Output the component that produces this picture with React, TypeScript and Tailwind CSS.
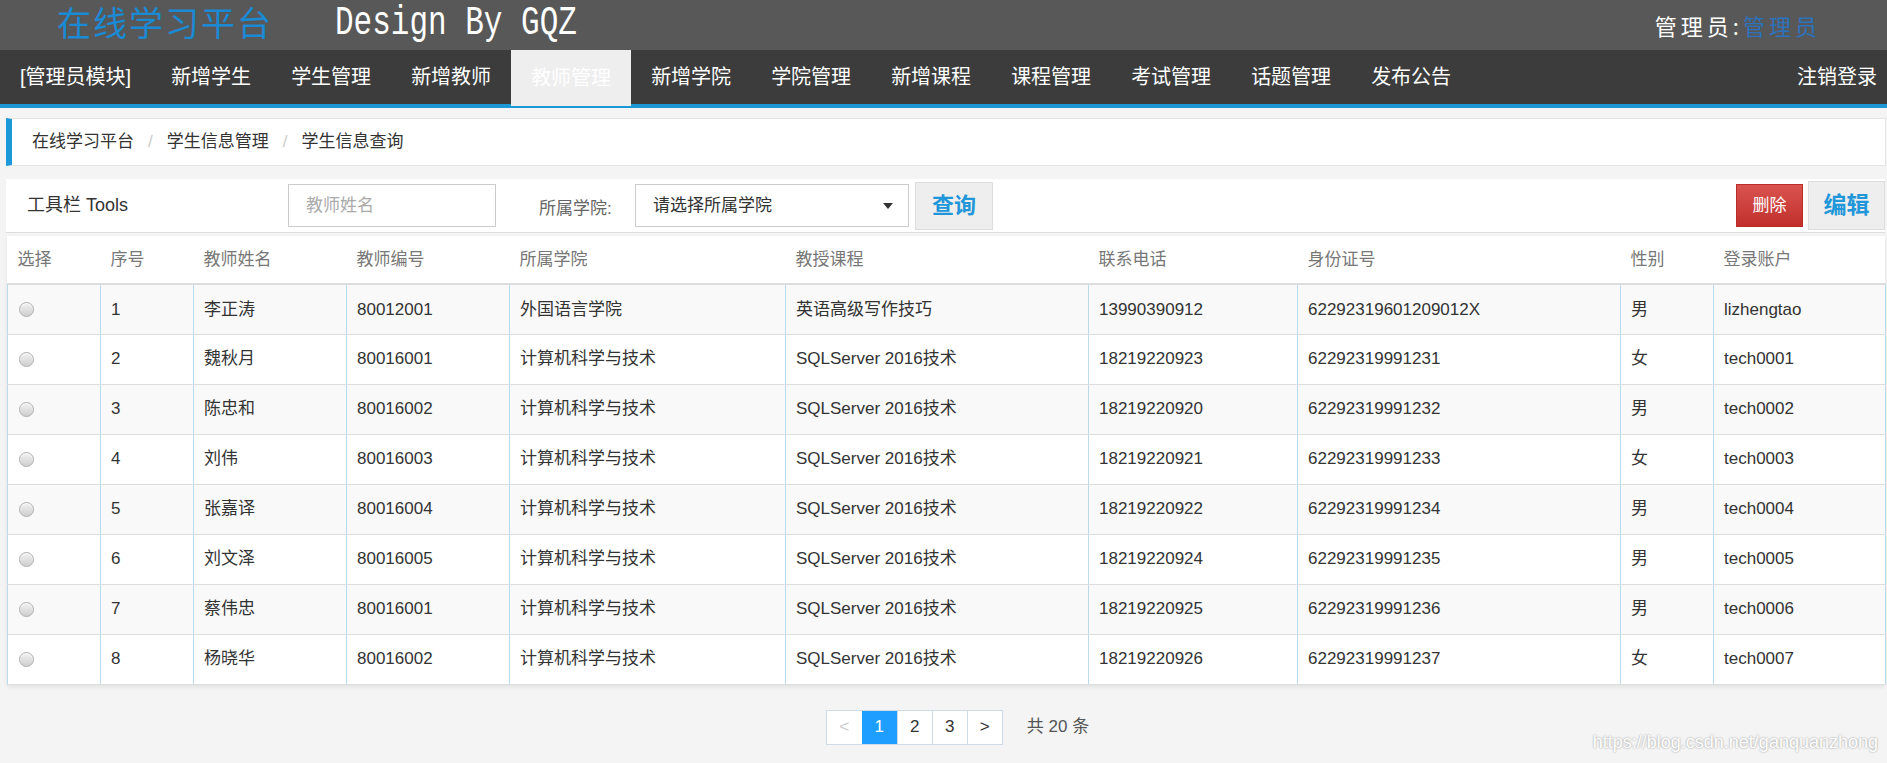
import React, { useState } from 'react';

const navItems = ['新增学生', '学生管理', '新增教师', '教师管理', '新增学院', '学院管理', '新增课程', '课程管理', '考试管理', '话题管理', '发布公告'];

const teachers = [
  { name: '李正涛', no: '80012001', college: '外国语言学院', course: '英语高级写作技巧', phone: '13990390912', id: '62292319601209012X', sex: '男', account: 'lizhengtao' },
  { name: '魏秋月', no: '80016001', college: '计算机科学与技术', course: 'SQLServer 2016技术', phone: '18219220923', id: '62292319991231', sex: '女', account: 'tech0001' },
  { name: '陈忠和', no: '80016002', college: '计算机科学与技术', course: 'SQLServer 2016技术', phone: '18219220920', id: '62292319991232', sex: '男', account: 'tech0002' },
  { name: '刘伟', no: '80016003', college: '计算机科学与技术', course: 'SQLServer 2016技术', phone: '18219220921', id: '62292319991233', sex: '女', account: 'tech0003' },
  { name: '张嘉译', no: '80016004', college: '计算机科学与技术', course: 'SQLServer 2016技术', phone: '18219220922', id: '62292319991234', sex: '男', account: 'tech0004' },
  { name: '刘文泽', no: '80016005', college: '计算机科学与技术', course: 'SQLServer 2016技术', phone: '18219220924', id: '62292319991235', sex: '男', account: 'tech0005' },
  { name: '蔡伟忠', no: '80016001', college: '计算机科学与技术', course: 'SQLServer 2016技术', phone: '18219220925', id: '62292319991236', sex: '男', account: 'tech0006' },
  { name: '杨晓华', no: '80016002', college: '计算机科学与技术', course: 'SQLServer 2016技术', phone: '18219220926', id: '62292319991237', sex: '女', account: 'tech0007' },
];

const headers = ['选择', '序号', '教师姓名', '教师编号', '所属学院', '教授课程', '联系电话', '身份证号', '性别', '登录账户'];
const colWidths = [93, 93, 153, 163, 276, 303, 209, 323, 93, 172];

const App: React.FC = () => {
  const [selected, setSelected] = useState<number | null>(null);

  return (
    <div className="relative min-h-screen bg-[#f4f4f4] font-['Liberation_Sans','Noto_Sans_CJK_SC',sans-serif] text-[#333]">
      {/* top banner */}
      <header className="h-[50px] bg-[#585858] flex items-center">
        <div className="flex items-center pl-[57px] pb-[6px]">
          <span className="text-[34px] leading-none tracking-[2px] text-[#1a8ad4] font-['Noto_Sans_CJK_SC',sans-serif]">在线学习平台</span>
          <span className="ml-[62px] text-[31px] leading-none text-white font-['Liberation_Mono',monospace] scale-y-130">Design By GQZ</span>
        </div>
        <div className="ml-auto pr-[66px] text-[22px] leading-none tracking-[4px] font-['Noto_Sans_CJK_SC',sans-serif]">
          <span className="text-white">管理员:</span>
          <span className="text-[#2d72bc]">管理员</span>
        </div>
      </header>

      {/* nav */}
      <nav className="h-[54px] bg-[#3c3c3c] flex text-[20px] text-white">
        <a className="h-full px-5 flex items-center">[管理员模块]</a>
        {navItems.map((item) =>
          item === '教师管理' ? (
            <a key={item} className="relative z-10 h-[56px] px-5 flex items-center bg-[#eeeeee] text-white">
              {item}
            </a>
          ) : (
            <a key={item} className="h-full px-5 flex items-center">
              {item}
            </a>
          )
        )}
        <a className="ml-auto h-full pr-[10px] flex items-center">注销登录</a>
      </nav>
      <div className="h-[4px] bg-[#1b98d8]" />

      {/* breadcrumb */}
      <div className="mt-[10px] ml-[6px] mr-[1px] h-[48px] bg-white border border-[#e5e5e5] border-l-[6px] border-l-[#1b98d8] flex items-center pl-[20px] text-[17px] text-[#333]">
        <span>在线学习平台</span>
        <span className="mx-[14px] text-[#ccc]">/</span>
        <span>学生信息管理</span>
        <span className="mx-[14px] text-[#ccc]">/</span>
        <span>学生信息查询</span>
      </div>

      {/* toolbar */}
      <div className="mt-[13px] ml-[6px] mr-[2px] h-[54px] bg-white border-b border-[#dddddd] flex items-center text-[17px]">
        <div className="w-[282px] pl-[21px] text-[#333] text-[18px]">工具栏 Tools</div>
        <input
          className="w-[208px] h-[43px] border border-[#cccccc] px-[17px] text-[17px] outline-none placeholder:text-[#aaa]"
          placeholder="教师姓名"
        />
        <span className="ml-[43px] w-[96px] pt-[6px] text-[#666]">所属学院:</span>
        <div className="w-[274px] h-[43px] border border-[#cccccc] flex items-center pl-[17px] pr-[15px] text-[#333]">
          <span>请选择所属学院</span>
          <svg className="ml-auto" width="10" height="6" viewBox="0 0 10 6">
            <path d="M0 0h10L5 6z" fill="#333" />
          </svg>
        </div>
        <button className="ml-[6px] w-[78px] h-[48px] bg-[#eeeeee] border border-[#dddddd] text-[22px] font-bold text-[#2196d8]">查询</button>
        <button className="ml-auto w-[67px] h-[43px] bg-gradient-to-b from-[#d9534f] to-[#c12e2a] border border-[#b92c28] text-[17px] text-white">删除</button>
        <button className="ml-[5px] w-[77px] h-[49px] bg-[#eeeeee] border border-[#dddddd] text-[23px] font-bold text-[#2196d8]">编辑</button>
      </div>

      {/* table */}
      <div className="mt-[3px] ml-[7px] mr-[2px] bg-white shadow-[0_2px_4px_rgba(0,0,0,0.08)]">
        <table className="w-full table-fixed border-collapse text-[17px]">
          <colgroup>
            {colWidths.map((w, i) => (
              <col key={i} style={{ width: w }} />
            ))}
          </colgroup>
          <thead>
            <tr>
              {headers.map((h) => (
                <th key={h} className="h-[48px] px-[10px] text-left font-normal text-[#777] border-b-2 border-[#dddddd]">
                  {h}
                </th>
              ))}
            </tr>
          </thead>
          <tbody>
            {teachers.map((t, i) => {
              const cells = [String(i + 1), t.name, t.no, t.college, t.course, t.phone, t.id, t.sex, t.account];
              return (
                <tr key={i} className={i % 2 === 0 ? 'bg-[#f9f9f9]' : 'bg-white'}>
                  <td className="h-[50px] pl-[11px] border-l border-r border-b border-l-[#b8dcee] border-r-[#b8dcee] border-b-[#dddddd]">
                    <span
                      onClick={() => setSelected(i)}
                      className="block w-[15px] h-[15px] rounded-full border border-[#b0b0b0] bg-gradient-to-b from-[#f2f2f2] to-[#cfcfcf] shadow-[inset_0_1px_1px_rgba(255,255,255,0.8)]"
                    >
                      {selected === i && <span className="block w-[7px] h-[7px] m-[3px] rounded-full bg-[#555]" />}
                    </span>
                  </td>
                  {cells.map((c, j) => (
                    <td
                      key={j}
                      className="h-[50px] px-[10px] whitespace-nowrap border-r border-b border-r-[#b8dcee] border-b-[#dddddd] text-[#333]"
                    >
                      {c}
                    </td>
                  ))}
                </tr>
              );
            })}
          </tbody>
        </table>
      </div>

      {/* pagination */}
      <div className="pt-[25px] pb-[16px] flex justify-center items-center pl-[28px] text-[17px]">
        <div className="flex h-[35px] border border-[#cfdbe6] bg-white">
          <span className="w-[35px] flex items-center justify-center text-[#cccccc]">&lt;</span>
          <span className="w-[35px] flex items-center justify-center bg-[#1e9fff] text-white">1</span>
          <span className="w-[35px] flex items-center justify-center border-l border-[#cfdbe6] text-[#333]">2</span>
          <span className="w-[35px] flex items-center justify-center border-l border-[#cfdbe6] text-[#333]">3</span>
          <span className="w-[35px] flex items-center justify-center border-l border-[#cfdbe6] text-[#333]">&gt;</span>
        </div>
        <span className="ml-[24px] text-[#555]">共 20 条</span>
      </div>

      <div className="absolute right-[9px] bottom-[7px] text-[18px] text-white [text-shadow:0_0_2px_#8a8a8a]">
        https://blog.csdn.net/ganquanzhong
      </div>
    </div>
  );
};

export default App;
